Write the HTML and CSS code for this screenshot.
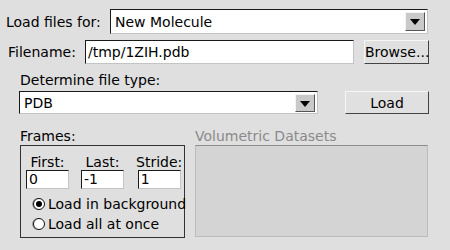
FILE: index.html
```html
<!DOCTYPE html>
<html lang="en">
<head>
  <meta charset="UTF-8" />
  <title>Molecule File Browser</title>
  <link rel="stylesheet" href="styles.css">
</head>
<body>

  <div class="row row-target">
    <span class="label label-target">Load files for:</span>
    <div class="choice choice-target">
      <span class="choice-text">New Molecule</span>
      <span class="arrow"></span>
    </div>
  </div>

  <div class="row row-file">
    <span class="label label-file">Filename:</span>
    <div class="field field-file">/tmp/1ZIH.pdb</div>
    <button class="btn btn-browse">Browse...</button>
  </div>

  <div class="heading heading-type">Determine file type:</div>
  <div class="row row-type">
    <div class="choice choice-type">
      <span class="choice-text">PDB</span>
      <span class="arrow"></span>
    </div>
    <button class="btn btn-load">Load</button>
  </div>

  <div class="bottom">
    <section class="frames">
      <div class="heading">Frames:</div>
      <div class="frames-box">
        <div class="frame-fields">
          <div class="frame-field">
            <span class="small-label">First:</span>
            <div class="field field-small">0</div>
          </div>
          <div class="frame-field">
            <span class="small-label">Last:</span>
            <div class="field field-small">-1</div>
          </div>
          <div class="frame-field">
            <span class="small-label">Stride:</span>
            <div class="field field-small">1</div>
          </div>
        </div>
        <div class="radio-row"><span class="radio checked"></span>Load in background</div>
        <div class="radio-row"><span class="radio"></span>Load all at once</div>
      </div>
    </section>

    <section class="volumes">
      <div class="heading disabled">Volumetric Datasets</div>
      <div class="volumes-box"></div>
    </section>
  </div>

</body>
</html>
```

FILE: styles.css
```css
* {
  box-sizing: border-box;
  margin: 0;
  padding: 0;
}

body {
  font-family: 'DejaVu Sans', sans-serif;
  font-size: 14px;
  background-color: #dfdfdf;
  color: #000;
  width: 450px;
  height: 250px;
  overflow: hidden;
}

.row {
  display: flex;
  align-items: center;
}

.row-target {
  margin-top: 9px;
  padding-left: 6px;
  height: 25px;
}

.label-target {
  width: 104px;
}

.choice {
  display: flex;
  align-items: center;
  justify-content: space-between;
  background: #fff;
  border: 1px solid;
  border-color: #1a1a1a #c4c4c4 #c4c4c4 #1a1a1a;
  padding-left: 4px;
  padding-right: 2px;
}

.choice-target {
  width: 318px;
  height: 25px;
}

.arrow {
  flex-shrink: 0;
  width: 20px;
  height: 19px;
  background: #c9c9c9;
  border: 1px solid;
  border-color: #f4f4f4 #555 #555 #f4f4f4;
  position: relative;
}

.arrow::after {
  content: "";
  position: absolute;
  left: 4px;
  top: 6px;
  border-left: 5px solid transparent;
  border-right: 5px solid transparent;
  border-top: 6px solid #000;
}

.row-file {
  margin-top: 6px;
  padding-left: 8px;
  height: 24px;
}

.label-file {
  width: 77px;
}

.field {
  background: #fff;
  border: 1px solid;
  border-color: #1a1a1a #c4c4c4 #c4c4c4 #1a1a1a;
  padding-left: 2px;
  line-height: 16px;
}

.field-file {
  width: 269px;
  height: 24px;
  padding-top: 3px;
}

.btn {
  font-family: inherit;
  font-size: 14px;
  color: #000;
  background: #e0e0e0;
  border: 1px solid;
  border-color: #f6f6f6 #444 #444 #f6f6f6;
}

.btn-browse {
  width: 65px;
  height: 24px;
  margin-left: 10px;
  padding: 0;
}

.heading {
  line-height: 17px;
}

.heading-type {
  margin-top: 8px;
  padding-left: 20px;
}

.row-type {
  margin-top: 2px;
  padding-left: 19px;
  height: 23px;
}

.choice-type {
  width: 299px;
  height: 23px;
}

.choice-type .arrow {
  height: 18px;
}

.btn-load {
  width: 84px;
  height: 23px;
  margin-left: 27px;
}

.bottom {
  display: flex;
  margin-top: 14px;
  padding-left: 20px;
}

.frames {
  width: 165px;
}

.frames-box {
  height: 93px;
  border: 1px solid #333;
  padding: 8px 4px 0 5px;
}

.frame-fields {
  display: flex;
  gap: 12px;
}

.frame-field {
  display: flex;
  flex-direction: column;
  align-items: center;
}

.small-label {
  line-height: 16px;
}

.field-small {
  width: 43px;
  height: 19px;
  line-height: 17px;
}

.radio-row {
  display: flex;
  align-items: center;
  gap: 3px;
  margin-left: 7px;
  height: 20px;
  white-space: nowrap;
}

.frame-fields + .radio-row {
  margin-top: 5px;
}

.radio {
  flex-shrink: 0;
  width: 12px;
  height: 12px;
  border-radius: 50%;
  background: #fff;
  border: 1px solid #111;
  box-shadow: -1px 0 0 #999;
  position: relative;
}

.radio.checked::after {
  content: "";
  position: absolute;
  left: 2px;
  top: 2px;
  width: 6px;
  height: 6px;
  border-radius: 50%;
  background: #000;
}

.volumes {
  width: 233px;
  margin-left: 10px;
}

.disabled {
  color: #8a8a8a;
}

.volumes-box {
  height: 92px;
  background: #d4d4d4;
  border: 1px solid;
  border-color: #8c8c8c #bcbcbc #bcbcbc #bcbcbc;
}
```
